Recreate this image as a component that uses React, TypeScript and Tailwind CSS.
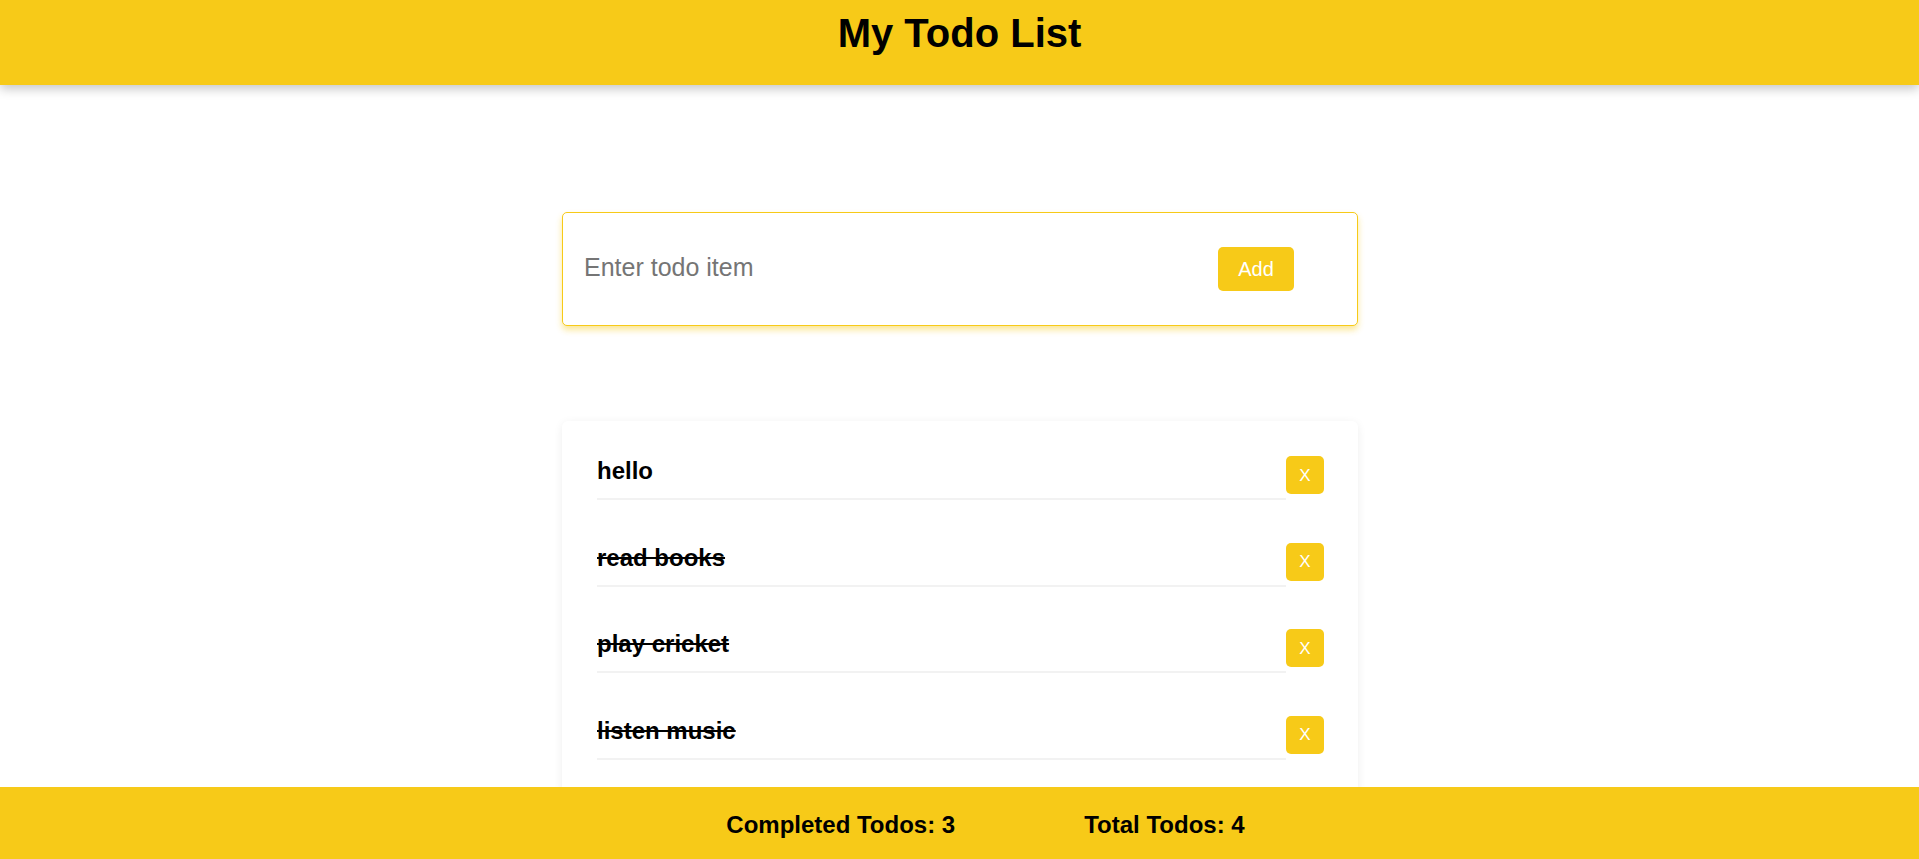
import React, { useState } from "react";

type Todo = { id: number; text: string; done: boolean };

export default function App() {
  const [todos, setTodos] = useState<Todo[]>([
    { id: 1, text: "hello", done: false },
    { id: 2, text: "read books", done: true },
    { id: 3, text: "play cricket", done: true },
    { id: 4, text: "listen music", done: true },
  ]);
  const [value, setValue] = useState("");

  const add = () => {
    if (!value.trim()) return;
    setTodos([...todos, { id: Date.now(), text: value.trim(), done: false }]);
    setValue("");
  };

  const completed = todos.filter((t) => t.done).length;

  return (
    <div className="min-h-screen bg-white font-['Liberation_Sans',Arial,sans-serif] text-black">
      <header className="h-[85px] bg-[#F7CA18] pt-[10px] shadow-[0_4px_10px_rgba(0,0,0,0.22)] relative z-10">
        <h1 className="text-center text-[40px] font-bold leading-[46px]">My Todo List</h1>
      </header>

      <main className="flex flex-col items-center pl-[1px] pt-[127px]">
        <div className="flex h-[114px] w-[796px] items-center rounded-[5px] border border-[#F7CA18] bg-white pl-[21px] pr-[63px] shadow-[0_4px_6px_rgba(247,202,24,0.45)]">
          <input
            value={value}
            onChange={(e) => setValue(e.target.value)}
            placeholder="Enter todo item"
            className="mb-[4px] h-[29px] flex-1 bg-transparent text-[25px] leading-[29px] outline-none placeholder:text-[#757575]"
          />
          <button
            onClick={add}
            className="h-[44px] w-[76px] rounded-[5px] bg-[#F7CA18] text-[20px] leading-[23px] text-white"
          >
            Add
          </button>
        </div>

        <div className="mt-[95px] flex w-[796px] flex-col gap-[42.5px] rounded-[6px] bg-white pl-[35px] pr-[34px] pt-[35px] pb-[34px] shadow-[0_2px_10px_rgba(0,0,0,0.07)]">
          {todos.map((t) => (
            <div key={t.id} className="flex items-start">
              <div
                onClick={() =>
                  setTodos(todos.map((x) => (x.id === t.id ? { ...x, done: !x.done } : x)))
                }
                className={`mt-[1px] flex-1 cursor-pointer border-b-2 border-[#f2f2f2] pb-[13px] text-[24px] font-bold leading-[28px] ${
                  t.done ? "line-through" : ""
                }`}
              >
                {t.text}
              </div>
              <button
                onClick={() => setTodos(todos.filter((x) => x.id !== t.id))}
                className="flex h-[38px] w-[38px] items-center justify-center rounded-[5px] bg-[#F7CA18] text-[17px] leading-none text-white"
              >
                X
              </button>
            </div>
          ))}
        </div>
      </main>

      <footer className="fixed bottom-0 left-0 right-0 z-20 flex h-[72px] justify-center gap-[129px] bg-[#F7CA18] pl-[52px] pt-[24px] text-[24px] font-bold leading-[28px]">
        <span>Completed Todos: {completed}</span>
        <span>Total Todos: {todos.length}</span>
      </footer>
    </div>
  );
}
